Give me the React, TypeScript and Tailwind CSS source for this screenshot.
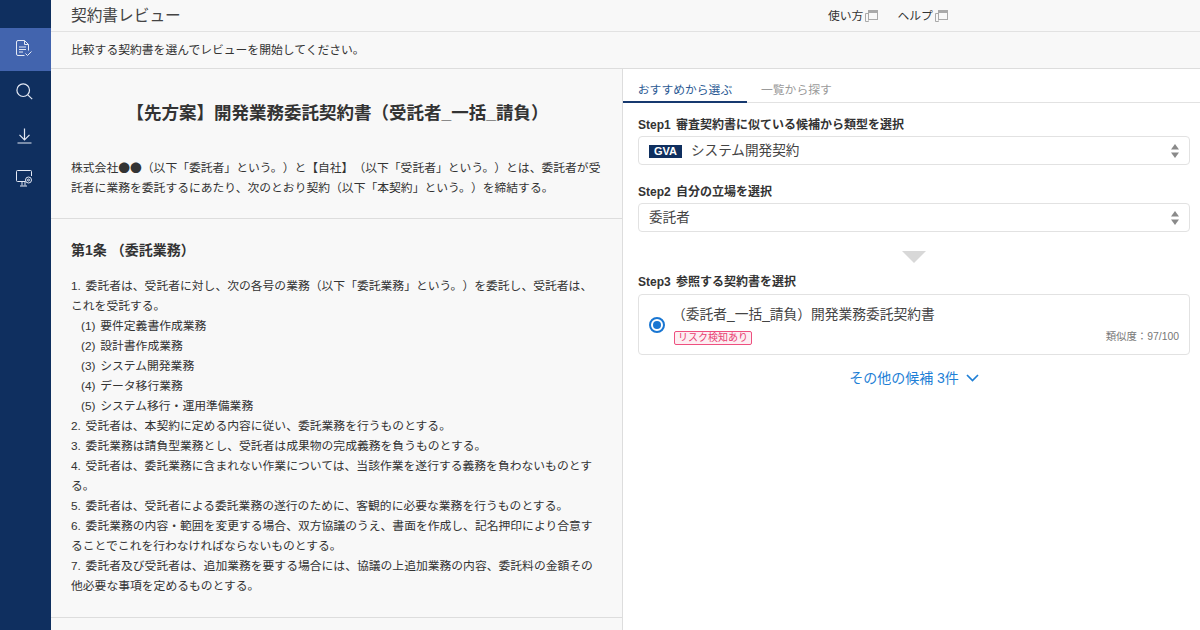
const font = { fontFamily: '"Liberation Sans", "Noto Sans CJK JP", sans-serif' };

function ExternalIcon() {
  return (
    <svg width="13" height="12" viewBox="0 0 13 12" fill="none" stroke="#a9a9a9" strokeWidth="1" className="ml-[2px]">
      <path d="M3.5 10.5V11.5H.5V3.5h3" />
      <rect x="3.5" y="0.5" width="9" height="9" />
      <rect x="3.5" y="0.5" width="9" height="2" fill="#a9a9a9" />
    </svg>
  );
}

function Updown() {
  return (
    <svg width="10" height="15" viewBox="0 0 10 15" className="absolute right-[9px] top-1/2 -translate-y-1/2" fill="#8a8a8a">
      <path d="M5 0.5L9 6H1z" />
      <path d="M5 14.5L9 9H1z" />
    </svg>
  );
}

const subs = ["(1) 要件定義書作成業務", "(2) 設計書作成業務", "(3) システム開発業務", "(4) データ移行業務", "(5) システム移行・運用準備業務"];
const rest = [
  "2. 受託者は、本契約に定める内容に従い、委託業務を行うものとする。",
  "3. 委託業務は請負型業務とし、受託者は成果物の完成義務を負うものとする。",
  "4. 受託者は、委託業務に含まれない作業については、当該作業を遂行する義務を負わないものとする。",
  "5. 委託者は、受託者による委託業務の遂行のために、客観的に必要な業務を行うものとする。",
  "6. 委託業務の内容・範囲を変更する場合、双方協議のうえ、書面を作成し、記名押印により合意することでこれを行わなければならないものとする。",
  "7. 委託者及び受託者は、追加業務を要する場合には、協議の上追加業務の内容、委託料の金額その他必要な事項を定めるものとする。",
];

export default function App() {
  return (
    <div style={font} className="w-[1200px] h-[630px] overflow-hidden flex bg-[#f8f8f8] text-[#333333] [text-spacing-trim:space-all]">
      <aside className="w-[51px] shrink-0 bg-[#0f2f5f] pt-[28px] flex flex-col">
        <div className="h-[43px] flex items-center justify-center pr-[4px] pb-[3px] bg-[#4264ae]">
          <svg width="16" height="17" viewBox="0 0 16 17" fill="none" stroke="#e4e9f4" strokeWidth="1">
            <path d="M8.5 15.5H2a1.5 1.5 0 0 1-1.5-1.5V2A1.5 1.5 0 0 1 2 .5h6.5l4 4v6" />
            <path d="M8.5.5v4h4M3 7h7M3 9.5h7M3 12h4" />
            <path d="M9.5 13.5l2 2 4-4" />
          </svg>
        </div>
        <div className="h-[43px] flex items-center justify-center pr-[3px] pb-[2px]">
          <svg width="17" height="17" viewBox="0 0 17 17" fill="none" stroke="#e4e9f4" strokeWidth="1.2">
            <circle cx="7.2" cy="7.2" r="6.3" />
            <path d="M11.8 11.8L16.2 16.2" />
          </svg>
        </div>
        <div className="h-[43px] flex items-center justify-center pr-[3px]">
          <svg width="15" height="16" viewBox="0 0 15 16" fill="none" stroke="#e4e9f4" strokeWidth="1.2">
            <path d="M7.5 0.5v11M2.5 6.8l5 5 5-5M.5 15h14" />
          </svg>
        </div>
        <div className="h-[43px] flex items-center justify-center pr-[3px]">
          <svg width="17" height="17" viewBox="0 0 17 17" fill="none" stroke="#e4e9f4" strokeWidth="1">
            <path d="M9.5 11.5H1.5a1 1 0 0 1-1-1V1.5a1 1 0 0 1 1-1h13a1 1 0 0 1 1 1V6" />
            <path d="M6 11.5v4M9 11.5v4M4 16h7" />
            <circle cx="12.5" cy="10" r="3" />
            <circle cx="12.5" cy="10" r="1" />
          </svg>
        </div>
      </aside>
      <div className="flex-1 flex flex-col min-w-0">
        <header className="h-[32px] shrink-0 border-b border-[#e2e2e2] flex items-center pl-[20px] pt-[1px] relative">
          <div className="text-[15.7px] text-[#444444]">契約書レビュー</div>
          <div className="absolute left-[777px] top-[8px] flex items-center text-[11.8px] h-[16px]">
            <span className="mt-[1px]">使い方</span><ExternalIcon />
            <span className="ml-[19px] mt-[1px]">ヘルプ</span><ExternalIcon />
          </div>
        </header>
        <div className="h-[37px] shrink-0 border-b border-[#dddddd] flex items-center pl-[20px] pt-[2px] text-[11.8px]">
          比較する契約書を選んでレビューを開始してください。
        </div>
        <div className="flex-1 flex min-h-0">
          <main className="w-[572px] shrink-0 border-r border-[#dddddd] flex flex-col">
            <section className="h-[150px] shrink-0 border-b border-[#dddddd] pl-[20px] pr-[18px] pt-[31px]">
              <h1 className="text-[17.5px] font-bold text-center leading-[26px]">【先方案】開発業務委託契約書（受託者_一括_請負）</h1>
              <p className="mt-[31px] text-[11.8px] leading-[20px] font-['Noto_Sans_CJK_JP']">
                株式会社●●（以下「委託者」という。）と【自社】（以下「受託者」という。）とは、委託者が受託者に業務を委託するにあたり、次のとおり契約（以下「本契約」という。）を締結する。
              </p>
            </section>
            <section className="h-[399px] shrink-0 border-b border-[#dddddd] pl-[20px] pr-[20px] pt-[21px]">
              <h2 className="text-[14px] font-bold leading-[20px] mb-[15px]">第1条 （委託業務）</h2>
              <div className="text-[11.8px] leading-[20px] pt-[1px] [word-spacing:1.5px]">
                <p>1. 委託者は、受託者に対し、次の各号の業務（以下「委託業務」という。）を委託し、受託者は、これを受託する。</p>
                {subs.map((t) => <p key={t} className="pl-[10px]">{t}</p>)}
                {rest.map((t) => <p key={t}>{t}</p>)}
              </div>
            </section>
          </main>
          <section className="flex-1 bg-white min-w-0">
            <div className="h-[34px] border-b border-[#e2e2e2] flex text-[11.8px]">
              <div className="w-[124px] h-[34px] border-b-2 border-[#17396f] text-[#2b5a94] text-center leading-[42px]">おすすめから選ぶ</div>
              <div className="ml-[14px] text-[#9a9a9a] leading-[42px]">一覧から探す</div>
            </div>
            <div className="pl-[15px] pr-[10px]">
              <h3 className="mt-[14px] text-[12px] font-bold leading-[16px] [word-spacing:2px]">Step1 審査契約書に似ている候補から類型を選択</h3>
              <div className="relative mt-[3px] h-[29px] rounded-[4px] border border-[#e2e2e2] flex items-center pl-[10px] pt-[1px] text-[13.6px] text-[#444444]">
                <span className="w-[33px] h-[13px] bg-[#0f2f5f] text-white text-[11px] font-bold flex items-center justify-center mr-[9px]">GVA</span>
                システム開発契約
                <Updown />
              </div>
              <h3 className="mt-[19px] text-[12px] font-bold leading-[16px] [word-spacing:2px]">Step2 自分の立場を選択</h3>
              <div className="relative mt-[3px] h-[29px] rounded-[4px] border border-[#e2e2e2] flex items-center pl-[10px] pt-[1px] text-[13.6px] text-[#444444]">
                委託者
                <Updown />
              </div>
              <div className="flex justify-center mt-[19px]">
                <div className="w-0 h-0 border-l-[12px] border-r-[12px] border-t-[12px] border-l-transparent border-r-transparent border-t-[#d8d8d8]" />
              </div>
              <h3 className="mt-[11px] text-[12px] font-bold leading-[16px] [word-spacing:2px]">Step3 参照する契約書を選択</h3>
              <div className="relative mt-[4px] h-[61px] rounded-[4px] border border-[#e2e2e2] flex items-center pl-[10px]">
                <span className="w-[16px] h-[16px] rounded-full border-[2px] border-[#1976d2] flex items-center justify-center mr-[9px]">
                  <span className="w-[8px] h-[8px] rounded-full bg-[#1976d2]" />
                </span>
                <div>
                  <div className="text-[13.75px] text-[#444444] leading-[20px] -ml-[2px]">（委託者_一括_請負）開発業務委託契約書</div>
                  <div className="mt-[6px] h-[14px] w-[78px] border border-[#ee4f7f] bg-[#fdeef2] rounded-[2px] text-[#e83e72] text-[10px] leading-[12px] text-center">リスク検知あり</div>
                </div>
                <span className="absolute right-[10px] bottom-[10px] text-[10.4px] leading-[14px] text-[#777777]">類似度：97/100</span>
              </div>
              <div className="mt-[13px] flex items-center justify-center text-[14px] text-[#1e7fd6] leading-[20px]">
                その他の候補 3件
                <svg width="13" height="8" viewBox="0 0 13 8" fill="none" stroke="#1e7fd6" strokeWidth="1.7" className="ml-[7px]">
                  <path d="M1 1l5.5 5.5L12 1" />
                </svg>
              </div>
            </div>
          </section>
        </div>
      </div>
    </div>
  );
}
